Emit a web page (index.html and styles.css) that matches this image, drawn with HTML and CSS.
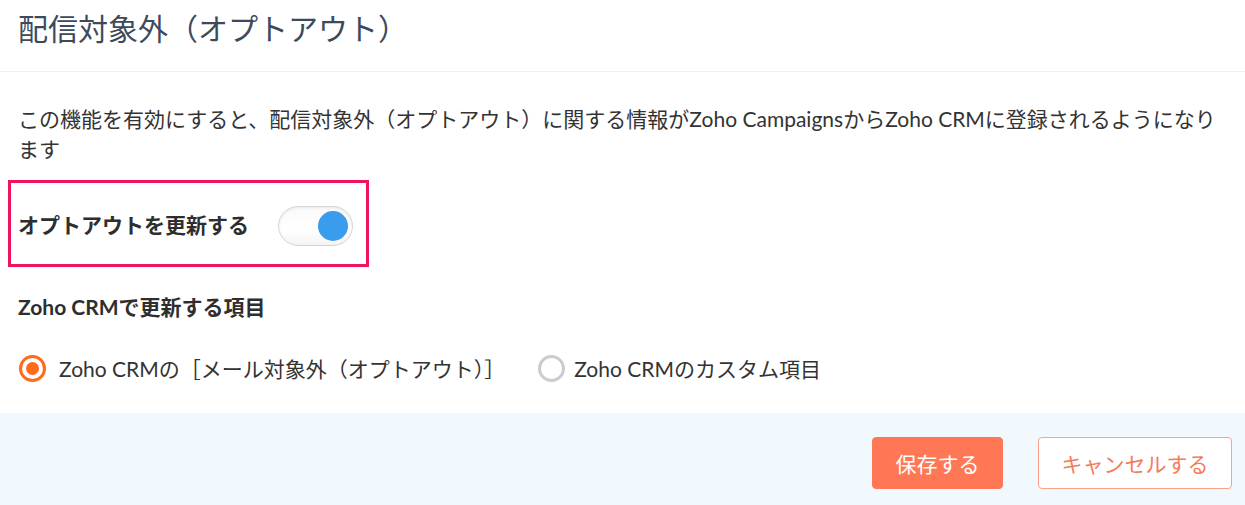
FILE: index.html
```html
<!DOCTYPE html>
<html lang="ja">
<head>
<meta charset="utf-8">
<link rel="stylesheet" href="styles.css">
</head>
<body>
<div class="panel">
  <header class="head">
    <h1 class="title">配信対象外（オプトアウト）</h1>
  </header>
  <main class="body">
    <p class="desc">この機能を有効にすると、配信対象外（オプトアウト）に関する情報がZoho CampaignsからZoho CRMに登録されるようになります</p>
    <div class="highlight">
      <span class="strong">オプトアウトを更新する</span>
      <span class="toggle"><span class="knob"></span></span>
    </div>
    <div class="section-label strong">Zoho CRMで更新する項目</div>
    <div class="radios">
      <label class="option"><span class="radio on"></span><span class="opt-text">Zoho CRMの［メール対象外（オプトアウト）］</span></label>
      <label class="option tight"><span class="radio"></span><span class="opt-text">Zoho CRMのカスタム項目</span></label>
    </div>
  </main>
  <footer class="foot">
    <button class="btn primary">保存する</button>
    <button class="btn ghost">キャンセルする</button>
  </footer>
</div>
</body>
</html>
```
FILE: styles.css
```css
html, body {
  margin: 0;
  padding: 0;
  background: #ffffff;
  overflow: hidden;
}
body {
  font-family: "Lato", "Noto Sans CJK JP", sans-serif;
  color: #333333;
}
.panel {
  width: 1245px;
  height: 505px;
  display: flex;
  flex-direction: column;
}
.head {
  height: 72px;
  border-bottom: 1px solid #eeeeee;
  padding: 0 18px;
  box-sizing: border-box;
  display: flex;
  align-items: center;
}
.title {
  margin: 0;
  font-size: 30px;
  font-weight: 400;
  color: #3d4a5c;
  line-height: 1;
  padding-bottom: 16px;
  padding-top: 0;
}
.body {
  flex: 1;
  padding: 32px 18px 0 18px;
}
.desc {
  margin: 0;
  font-size: 21px;
  line-height: 30px;
  color: #333333;
}
.strong {
  font-weight: 700;
  font-size: 21px;
  color: #2e2e2e;
}
.highlight {
  margin: 16px 0 0 -10px;
  width: 361px;
  height: 87px;
  box-sizing: border-box;
  border: 3px solid #f0145a;
  display: flex;
  align-items: center;
  padding-left: 7px;
  gap: 29px;
}
.toggle {
  width: 75px;
  height: 40px;
  box-sizing: border-box;
  border-radius: 20px;
  border: 1px solid #d6d6d6;
  background: linear-gradient(180deg, #fafafa, #ffffff 60%, #f4f4f4);
  box-shadow: inset 0 1px 3px rgba(0,0,0,0.08);
  display: flex;
  align-items: center;
  justify-content: flex-end;
  padding-right: 4px;
  margin-top: 4px;
}
.knob {
  width: 30px;
  height: 30px;
  border-radius: 50%;
  background: #3a9cec;
}
.section-label {
  margin-top: 25px;
  line-height: 30px;
}
.radios {
  margin-top: 31px;
  display: flex;
  align-items: center;
  gap: 32px;
  height: 30px;
}
.option {
  display: flex;
  align-items: center;
  gap: 13px;
  font-size: 21px;
  color: #333333;
}
.option.tight {
  gap: 9px;
}
.radio {
  width: 27px;
  height: 27px;
  box-sizing: border-box;
  border-radius: 50%;
  border: 3px solid #cccccc;
  display: flex;
  align-items: center;
  justify-content: center;
  margin-left: 1px;
}
.radio.on {
  border: 3px solid #ff6a1c;
}
.radio.on::after {
  content: "";
  width: 13px;
  height: 13px;
  border-radius: 50%;
  background: #ff6a1c;
}
.foot {
  height: 92px;
  box-sizing: border-box;
  background: #f1f8fe;
  display: flex;
  justify-content: flex-end;
  align-items: flex-start;
  padding: 24px 13px 0 0;
  gap: 35px;
}
.btn {
  height: 52px;
  border-radius: 4px;
  font-family: "Lato", "Noto Sans CJK JP", sans-serif;
  font-size: 21px;
  box-sizing: border-box;
  cursor: pointer;
}
.primary {
  width: 131px;
  background: #ff7755;
  border: 1px solid #ff7755;
  color: #ffffff;
}
.ghost {
  width: 194px;
  background: #ffffff;
  border: 1px solid #ff9f88;
  color: #f47a5c;
}
```
